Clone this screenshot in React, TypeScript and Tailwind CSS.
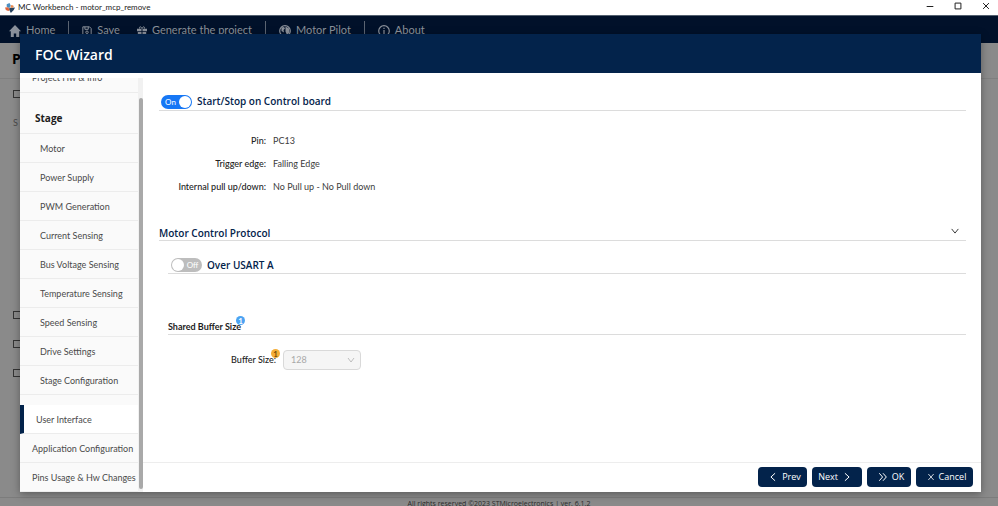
import React, { useState } from 'react';

const stageSteps = [
  'Motor',
  'Power Supply',
  'PWM Generation',
  'Current Sensing',
  'Bus Voltage Sensing',
  'Temperature Sensing',
  'Speed Sensing',
  'Drive Settings',
  'Stage Configuration',
];

const pinSettings = [
  { label: 'Pin:', value: 'PC13' },
  { label: 'Trigger edge:', value: 'Falling Edge' },
  { label: 'Internal pull up/down:', value: 'No Pull up - No Pull down' },
];

interface IconProps {
  className?: string;
  children: React.ReactNode;
}

function Icon({ className = 'size-2.5', children }: IconProps) {
  return (
    <svg
      viewBox="0 0 12 12"
      className={`shrink-0 ${className}`}
      fill="none"
      stroke="currentColor"
      strokeWidth="1.2"
      aria-hidden="true"
    >
      {children}
    </svg>
  );
}

function Logo() {
  return (
    <svg viewBox="0 0 12 12" className="size-2.5 shrink-0" aria-hidden="true">
      <path d="M2 1.500 5.500 0 7 3.500 4.500 6 2 4.500z" fill="#4d8fc0" />
      <path d="M7.500 2.500l2.500.5.5 2-2.500 1-1.500-1z" fill="#e88a50" />
      <path d="M0 5.500l3.500-.5L6 8l-2 1.500L1 8.500z" fill="#e0643c" />
      <path d="M5 5.500l3 .5 4-.5-1.500 3L7 12 5.500 9z" fill="#26425f" />
    </svg>
  );
}

interface ToggleProps {
  id: string;
  defaultOn: boolean;
}

function Toggle({ id, defaultOn }: ToggleProps) {
  const [on, setOn] = useState(defaultOn);

  return (
    <label
      htmlFor={id}
      className={`flex h-3.5 w-[31px] shrink-0 items-center rounded-full px-px text-[8px] text-white ${
        on ? 'flex-row-reverse bg-[#1677f5]' : 'bg-[#bdbdbd]'
      }`}
    >
      <input
        id={id}
        type="checkbox"
        role="switch"
        checked={on}
        onChange={(e) => setOn(e.target.checked)}
        className="size-3 shrink-0 appearance-none rounded-full bg-white"
      />
      <span className="flex-1 text-center leading-3">{on ? 'On' : 'Off'}</span>
    </label>
  );
}

interface StepLinkProps {
  className: string;
  children: React.ReactNode;
}

function StepLink({ className, children }: StepLinkProps) {
  return (
    <a
      href="#"
      className={`flex h-[29px] shrink-0 items-center border-b border-[#ececec] whitespace-nowrap ${className}`}
    >
      {children}
    </a>
  );
}

const heading = "font-['Open_Sans','Noto_Sans',sans-serif]";

function Sidebar() {
  return (
    <nav className="mt-[5px] flex w-[123px] shrink-0 overflow-hidden bg-[#f1f1f1] text-[9px] text-[#4a4a4a]">
      <div className="flex w-[118px] shrink-0 flex-col justify-end bg-[#fafafa]">
        <StepLink className="pb-px pl-3">Project Hw &amp; Info</StepLink>
        <h2
          className={`${heading} flex h-[41px] shrink-0 items-center border-b border-[#ececec] pt-2.5 pl-[15px] text-[10px] font-bold text-[#1c1c1c]`}
        >
          Stage
        </h2>
        {stageSteps.map((step) => (
          <StepLink key={step} className="pt-px pl-5">
            {step}
          </StepLink>
        ))}
        <div className="h-2.5 shrink-0" />
        <StepLink className="border-l-4 border-l-[#03234b] bg-white pt-px pl-3">User Interface</StepLink>
        <StepLink className="pt-px pl-3">Application Configuration</StepLink>
        <StepLink className="pt-px pl-3">Pins Usage &amp; Hw Changes</StepLink>
      </div>
      <div className="flex-1 pt-5 pb-[3px]">
        <div className="ml-px h-full rounded-sm bg-[#a9a9a9]" />
      </div>
    </nav>
  );
}

const navItem = 'flex items-center gap-[5px]';
const sectionTitle = `${heading} text-[10px] font-semibold text-[#03234b]`;
const footerButton = `${heading} flex h-5 items-center justify-center gap-1 rounded bg-[#03234b] text-[9px] font-medium text-white`;

function WizardContent() {
  return (
    <main className="flex-1 pt-[21px] pr-[15px] pl-4 text-[9px] text-[#3c3c3c]">
      <section>
        <div className="flex h-[17px] items-center gap-[5px] border-b border-[#dcdcdc] pb-px pl-0.5">
          <Toggle id="start-stop" defaultOn />
          <label htmlFor="start-stop" className={sectionTitle}>
            Start/Stop on Control board
          </label>
        </div>
        <dl className="mt-[18px]">
          {pinSettings.map((item) => (
            <div key={item.label} className="flex h-[23px] items-center gap-[7px]">
              <dt className="w-[107px] text-right font-medium whitespace-nowrap text-[#222]">{item.label}</dt>
              <dd>{item.value}</dd>
            </div>
          ))}
        </dl>
      </section>

      <section className="mt-[27px]">
        <div className="flex h-4 items-center justify-between border-b border-[#dcdcdc] pr-1.5">
          <h2 className={`${sectionTitle} pt-0.5`}>Motor Control Protocol</h2>
          <button type="button" aria-label="Collapse" className="pb-1">
            <Icon>
              <path d="M2 3.500 6 8.500l4-5" />
            </Icon>
          </button>
        </div>
        <div className="pl-[9px]">
          <div className="mt-4 flex h-[17px] items-center gap-[5px] border-b border-[#dcdcdc] pl-[3px]">
            <Toggle id="usart" defaultOn={false} />
            <label htmlFor="usart" className={sectionTitle}>
              Over USART A
            </label>
          </div>
          <div className="mt-[45px] flex h-4 items-center border-b border-[#dcdcdc] pt-px">
            <h3 className="relative text-[9px] font-bold text-[#1c1c1c]">
              Shared Buffer Size
              <span className="absolute -top-1 -right-1 flex size-[9px] items-center justify-center rounded-full bg-[#4ba3f2] text-[8px] text-white">
                1
              </span>
            </h3>
          </div>
          <div className="mt-[15px] flex h-5 items-center gap-[7px]">
            <label htmlFor="buffer-size" className="relative w-[108px] text-right font-medium text-[#222]">
              Buffer Size:
              <span className="absolute -top-1 -right-1 flex size-[9px] items-center justify-center rounded-full bg-[#f5ae38] text-[8px] text-[#5b3a00]">
                1
              </span>
            </label>
            <div className="relative w-[78px]">
              <select
                id="buffer-size"
                disabled
                className="h-5 w-full appearance-none rounded border border-[#d9d9d9] bg-[#f5f5f5] pl-[7px] text-[9px] text-[#a8a8a8] opacity-100"
              >
                <option>128</option>
              </select>
              <Icon className="pointer-events-none absolute top-1.5 right-1.5 size-2 text-[#b0b0b0]">
                <path d="M1.500 3 6 9l4.500-6" />
              </Icon>
            </div>
          </div>
        </div>
      </section>
    </main>
  );
}

function Wizard() {
  return (
    <div
      role="dialog"
      aria-label="FOC Wizard"
      className="absolute top-[34px] right-[17px] bottom-3.5 left-5 flex flex-col bg-white shadow-[0_2px_8px_rgba(0,0,0,0.35)]"
    >
      <h1
        className={`${heading} flex h-[39px] shrink-0 items-center bg-[#03234b] pt-0.5 pl-[15px] text-[14px] font-semibold text-white`}
      >
        FOC Wizard
      </h1>
      <div className="flex min-h-0 flex-1">
        <Sidebar />
        <div className="flex min-w-0 flex-1 flex-col">
          <WizardContent />
          <footer className="flex h-[30px] shrink-0 items-center justify-end gap-[5px] border-t border-[#ededed] pr-2 pb-px">
            <button type="button" className={`${footerButton} w-[49px] pl-1`}>
              <Icon>
                <path d="M8.500 1.500 3.500 6l5 4.500" />
              </Icon>
              Prev
            </button>
            <button type="button" className={`${footerButton} w-[50px] pr-1`}>
              Next
              <Icon>
                <path d="M3.500 1.500l5 4.500-5 4.500" />
              </Icon>
            </button>
            <button type="button" className={`${footerButton} w-11 pl-1`}>
              <Icon>
                <path d="M1.500 1.500 5.500 6l-4 4.500M6 1.500 10 6l-4 4.500" />
              </Icon>
              OK
            </button>
            <button type="button" className={`${footerButton} w-[57px] pl-1`}>
              <Icon className="size-2">
                <path d="M2 1.500l8 9M10 1.500l-8 9" />
              </Icon>
              Cancel
            </button>
          </footer>
        </div>
      </div>
    </div>
  );
}

export default function App() {
  return (
    <div className="relative flex h-screen flex-col overflow-hidden bg-[#8a8a8a] font-[Lato,'Open_Sans',sans-serif]">
      <header className="flex h-[15px] shrink-0 items-center gap-[3px] bg-white pr-[7px] pl-[5px] text-[8px] text-[#222]">
        <Logo />
        <span className="flex-1 pb-0.5">MC Workbench - motor_mcp_remove</span>
        <div className="flex gap-[18px] pb-1 text-[#222]">
          <button type="button" aria-label="Minimize">
            <Icon>
              <path d="M2 6.600h8" />
            </Icon>
          </button>
          <button type="button" aria-label="Maximize">
            <Icon>
              <path d="M2.500 2.500h7v7h-7z" />
            </Icon>
          </button>
          <button type="button" aria-label="Close">
            <Icon>
              <path d="M2.500 2.500l7 7M9.500 2.500l-7 7" />
            </Icon>
          </button>
        </div>
      </header>

      <nav className="flex h-7 shrink-0 items-center gap-[13px] border-t border-[#53606f] bg-[#01112a] pt-0.5 pl-[9px] text-[11px] text-[#8b919b]">
        <a href="#" className={navItem}>
          <Icon className="size-3">
            <path d="M6 0 0 6.200h1.800V12h3V8.500h2.400V12h3V6.200H12z" fill="currentColor" stroke="none" />
          </Icon>
          Home
        </a>
        <span className="h-5 w-px bg-[#5b6472]" />
        <a href="#" className={`${navItem} mr-1`}>
          <Icon>
            <path d="M1 1h8l2 2v8H1zM3.500 1v3h4V1" />
            <circle cx="6" cy="7.500" r="1.500" />
          </Icon>
          Save
        </a>
        <a href="#" className={navItem}>
          <Icon>
            <path d="M0 3.200h5.400v3H0zM6.600 3.200H12v3H6.600zM1 7.200h4.400V12H1zM6.600 7.200H11V12H6.600z" fill="currentColor" stroke="none" />
            <path d="M6 3C4.500 0 2.500.5 3 3M6 3c1.500-3 3.500-2.500 3 0" />
          </Icon>
          Generate the project
        </a>
        <span className="h-5 w-px bg-[#5b6472]" />
        <a href="#" className={navItem}>
          <Icon className="size-3">
            <circle cx="6" cy="6" r="5.300" />
            <path d="M2.500 2.500l2.500-.5 1 1.500-1.500 1.500.5 2.500L2.500 6zM6.500 1.500l3.500 2 .5 4-2.500 2.500-1.500-3.500z" fill="currentColor" stroke="none" />
          </Icon>
          Motor Pilot
        </a>
        <span className="h-5 w-px bg-[#5b6472]" />
        <a href="#" className={navItem}>
          <Icon className="size-3">
            <circle cx="6" cy="6" r="5.300" />
            <path d="M6 5v4M6 2.800v1.200" />
          </Icon>
          About
        </a>
      </nav>

      <div className="flex-1 text-[9px] text-[#4a4a4a]">
        <div className={`${heading} flex h-9 items-center border-b border-[#7f7f7f] pb-1 pl-3 text-[14px] font-bold text-black`}>
          P
        </div>
        <div className="flex h-[372px] flex-col pt-[11px] pl-[13px]">
          <input type="checkbox" aria-label="Show all" className="h-2 w-2.5 appearance-none border border-[#333]" />
          <span className="mt-[18px]">S</span>
          <div className="mt-auto flex flex-col gap-[21px] pb-[74px]">
            <input type="checkbox" aria-label="First board" className="h-2 w-2.5 appearance-none border border-[#333]" />
            <input type="checkbox" aria-label="Second board" className="h-2 w-2.5 appearance-none border border-[#333]" />
            <input type="checkbox" aria-label="Third board" className="h-2 w-2.5 appearance-none border border-[#333]" />
          </div>
        </div>
      </div>

      <footer
        className={`${heading} h-[9px] shrink-0 border-t border-[#7c7c7c] text-center text-[7px] leading-3 text-[#2b2b2b]`}
      >
        All rights reserved ©2023 STMicroelectronics | ver. 6.1.2
      </footer>

      <Wizard />
    </div>
  );
}
